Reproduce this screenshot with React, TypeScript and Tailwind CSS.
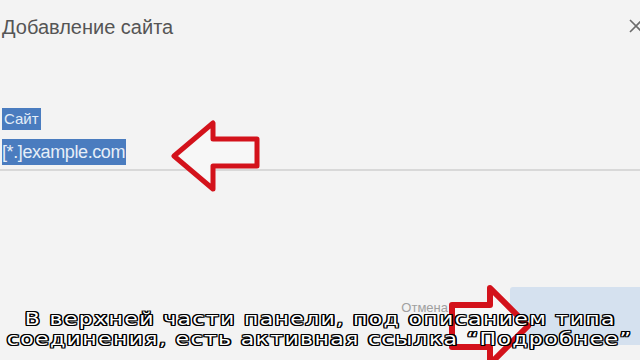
const subtitleShadow =
  '[text-shadow:-1px_-1px_0_#000,1px_-1px_0_#000,-1px_1px_0_#000,1px_1px_0_#000,0_1px_0_#000,0_-1px_0_#000,1px_0_0_#000,-1px_0_0_#000]';

function CloseIcon() {
  return (
    <svg width="16" height="16" viewBox="0 0 16 16" className="shrink-0 mt-[5px] mr-[-4px]">
      <path d="M2 2 L14 14 M14 2 L2 14" stroke="#6b6b6b" strokeWidth="1.6" fill="none" />
    </svg>
  );
}

function Arrows() {
  return (
    <svg width="640" height="360" viewBox="0 0 640 360" className="absolute inset-0 pointer-events-none">
      <polygon
        points="174,156 213,123 213,139 257,139 257,166 213,166 213,189"
        fill="#f7f7f7"
        stroke="#d3121b"
        strokeWidth="5"
        strokeLinejoin="round"
      />
      <polygon
        points="452,305 490,305 490,288 528,326 490,364 490,347 452,347"
        fill="#f7f7f7"
        stroke="#d3121b"
        strokeWidth="6"
        strokeLinejoin="round"
      />
    </svg>
  );
}

export default function App() {
  return (
    <div className="relative w-[640px] h-[360px] overflow-hidden bg-[#f3f3f3] font-['Liberation_Sans',Arial,sans-serif] flex flex-col">
      <div className="flex items-start justify-between pl-[2px] pt-[13px]">
        <h1 className="text-[20px] leading-[28px] text-[#555]">Добавление сайта</h1>
        <CloseIcon />
      </div>

      <div className="pl-[2px] pt-[67px] flex flex-col items-start">
        <span className="bg-[#4a7cbf] text-[#e3edf8] text-[15px] leading-[22px] px-[2px]">Сайт</span>
        <span className="mt-[9px] bg-[#4a7cbf] text-[#e6eef8] text-[18px] leading-[26px] pr-[1px] tracking-[-0.4px]">
          [*.]example.com
        </span>
      </div>
      <div className="mt-[4px] h-[2px] bg-[#d8d8d8]" />

      <div className="mt-auto mb-[15px] flex items-start justify-end h-[58px]">
        <span className="mr-[62px] mt-[14px] text-[13px] leading-[14px] text-[#a0a0a0]">Отмена</span>
        <div className="w-[132px] h-[58px] mr-[-2px] rounded-l-[3px] bg-[#d5e1ef]" />
      </div>

      <Arrows />

      <div
        className={`absolute left-0 right-0 top-[309px] flex flex-col items-center text-white font-['DejaVu_Sans',sans-serif] text-[17px] leading-[20px] ${subtitleShadow}`}
      >
        <p className="whitespace-nowrap scale-x-[1.3] tracking-[1px]">В верхней части панели, под описанием типа</p>
        <p className="whitespace-nowrap scale-x-[1.3] tracking-[1px]">соединения, есть активная ссылка “Подробнее”</p>
      </div>
    </div>
  );
}
